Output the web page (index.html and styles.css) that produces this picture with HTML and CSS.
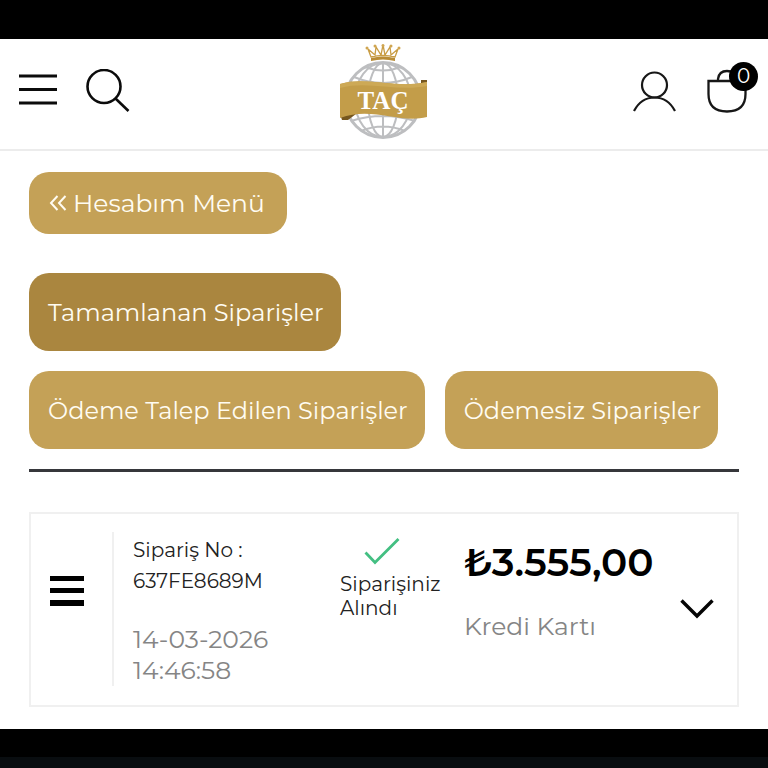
FILE: index.html
```html
<!DOCTYPE html>
<html lang="tr">
<head>
<meta charset="utf-8">
<meta name="viewport" content="width=device-width, initial-scale=1">
<title>Siparişler</title>
<link rel="stylesheet" href="styles.css">
</head>
<body>
<div class="status-strip"></div>
<header class="header">
  <div class="tools">
    <button class="icon-button" aria-label="Menü">
      <svg width="40" height="44" viewBox="0 0 40 44" fill="none" stroke="#0b0b0b" stroke-width="2.800"><path d="M1 7H39M1 20.500H39M1 34H39"/></svg>
    </button>
    <button class="icon-button" aria-label="Ara">
      <svg width="44" height="44" viewBox="0 0 44 44" fill="none" stroke="#0b0b0b" stroke-width="2.600"><circle cx="18" cy="17.500" r="16.500"/><path d="M29.500 29.500L42.500 42"/></svg>
    </button>
  </div>
  <a class="logo" href="#" aria-label="TAÇ">
    <svg width="92" height="98" viewBox="0 0 92 98">
      <g fill="none" stroke="#bdbec0" stroke-width="2">
        <circle cx="46" cy="58" r="37.500" stroke-width="3"/>
        <ellipse cx="46" cy="58" rx="15" ry="37"/>
        <ellipse cx="46" cy="58" rx="28" ry="37"/>
        <path d="M46 21V95M17 35Q46 47 75 35M28 25Q46 32 64 25M14 79Q46 69 78 79M24 89Q46 80 68 89"/>
      </g>
      <path d="M84 38H90V45H84ZM3 72H19L11 78H5Z" fill="#76571f"/>
      <path d="M3 42C30 34 58 47 90 40V75C62 82 35 64 3 76Z" fill="#c39d49"/>
      <path d="M3 42C30 34 58 47 90 40V44C60 50 30 38 3 46Z" fill="#cda956"/>
      <path d="M34 15L31 7L38 13L39 5L44 13L46 3L48 13L53 5L54 13L61 7L58 15Q46 12 34 15Z" fill="none" stroke="#c99d45" stroke-width="1.300"/>
      <path d="M34 16Q46 13 58 16V19Q46 16 34 19Z" fill="#b98c36"/>
      <g fill="#d0a652"><circle cx="30" cy="6" r="1.500"/><circle cx="38" cy="4" r="1.500"/><circle cx="46" cy="3.500" r="1.500"/><circle cx="54" cy="4" r="1.500"/><circle cx="62" cy="6" r="1.500"/></g>
      <text class="logo-text" x="46" y="67" text-anchor="middle">TAÇ</text>
    </svg>
  </a>
  <div class="tools tools-end">
    <button class="icon-button" aria-label="Hesabım">
      <svg width="44" height="44" viewBox="0 0 44 44" fill="none" stroke="#171717" stroke-width="2.200"><circle cx="21.500" cy="16" r="12.500"/><path d="M1 42C10.500 24 32.500 24 42 42"/></svg>
    </button>
    <button class="icon-button cart" aria-label="Sepet">
      <svg width="40" height="44" viewBox="0 0 40 44" fill="none" stroke="#171717" stroke-width="2.300"><path d="M1.500 12H38.500V25Q38.500 42.500 20 42.500Q1.500 42.500 1.500 25ZM11 12V10Q12 2 20 2Q28 2 29 10V12"/></svg>
      <span class="badge">0</span>
    </button>
  </div>
</header>
<main class="content">
  <button class="button back">
    <svg width="18" height="18" viewBox="0 0 18 18" fill="none" stroke="currentColor" stroke-width="2"><path d="M8.500 2L2 9L8.500 16M16.500 2L10 9L16.500 16"/></svg>
    Hesabım Menü
  </button>
  <nav class="filters" aria-label="Siparişler">
    <button class="button active">Tamamlanan Siparişler</button>
    <div class="filter-row">
      <button class="button">Ödeme Talep Edilen Siparişler</button>
      <button class="button">Ödemesiz Siparişler</button>
    </div>
  </nav>
  <article class="order">
    <div class="handle">
      <svg width="36" height="32" viewBox="0 0 36 32"><path d="M1 1H35V6H1ZM1 13H35V18H1ZM1 25H35V31H1Z" fill="#000"/></svg>
    </div>
    <div class="details">
      <p class="number">Sipariş No :<br>637FE8689M</p>
      <p class="muted">14-03-2026<br>14:46:58</p>
    </div>
    <div class="state">
      <svg width="36" height="28" viewBox="0 0 36 28" fill="none" stroke="#43bf82" stroke-width="2.800"><path d="M1.500 14.500L11 24.500L34.500 1"/></svg>
      <p>Siparişiniz Alındı</p>
    </div>
    <div class="payment">
      <p class="price">₺3.555,00</p>
      <p class="muted">Kredi Kartı</p>
    </div>
    <button class="icon-button expand" aria-label="Ayrıntılar">
      <svg width="34" height="20" viewBox="0 0 34 20" fill="none" stroke="#050505" stroke-width="3.400"><path d="M1.500 1.500L17 17L32.500 1.500"/></svg>
    </button>
  </article>
</main>
<footer class="navigation-strip"></footer>
</body>
</html>
```
FILE: styles.css
```css
* { box-sizing: border-box; }
body {
  display: flex;
  flex-direction: column;
  min-height: 100vh;
  margin: 0;
  background: #fff;
  color: #222;
  font-family: Montserrat, Inter, "Open Sans", sans-serif;
}
p { margin: 0; }
button { font: inherit; cursor: pointer; }
svg { display: block; }

.status-strip { height: 39px; background: #000; }
.header {
  display: grid;
  grid-template-columns: 1fr auto 1fr;
  align-items: center;
  height: 112px;
  padding: 0 21px 6px 18px;
  border-bottom: 2px solid #ececec;
}
.tools { display: flex; gap: 28px; }
.tools-end { justify-content: flex-end; gap: 30px; }
.icon-button { padding: 0; border: 0; background: none; color: inherit; }
.logo-text {
  fill: #fff;
  font-family: "Liberation Serif", serif;
  font-size: 25px;
  font-weight: 700;
}
.cart { position: relative; }
.badge {
  position: absolute;
  top: -7px;
  right: -11px;
  width: 29px;
  height: 29px;
  border-radius: 50%;
  background: #000;
  color: #fff;
  font-size: 20px;
  line-height: 29px;
  text-align: center;
}

.content { flex: 1; padding: 21px 29px 22px; }
.button {
  height: 78px;
  padding: 0 17px 0 19px;
  border: 0;
  border-radius: 20px;
  background: #c4a157;
  color: #fffcf2;
  font-size: 24px;
  font-weight: 400;
  white-space: nowrap;
}
.active { background: #aa863f; }
.back {
  display: flex;
  align-items: center;
  gap: 6px;
  height: 62px;
  padding: 0 22px 0 20px;
  font-size: 25px;
}
.filters {
  display: flex;
  flex-direction: column;
  align-items: flex-start;
  gap: 20px;
  margin-top: 39px;
  padding-bottom: 20px;
  border-bottom: 3px solid #36373b;
}
.filter-row { display: flex; flex-wrap: wrap; gap: 20px; }

.order {
  display: grid;
  grid-template-columns: 83px 208px 124px 1fr auto;
  margin-top: 40px;
  padding: 18px 23px 19px 0;
  border: 2px solid #f0f0f0;
}
.handle {
  display: flex;
  align-items: center;
  padding: 0 0 36px 18px;
  border-right: 2px solid #f0f0f0;
}
.details { padding-left: 19px; }
.number { padding-top: 3px; font-size: 20px; line-height: 31px; }
.muted { color: #858585; font-size: 25px; line-height: 31px; }
.details .muted { margin-top: 27px; }
.state { padding: 6px 20px 0 18px; font-size: 20px; line-height: 24px; }
.state svg { margin: 0 0 6px 24px; }
.payment { padding-left: 18px; }
.price {
  color: #000;
  font-size: 39px;
  font-weight: 600;
  line-height: 60px;
  white-space: nowrap;
}
.payment .muted { margin-top: 19px; }
.expand { align-self: center; }
.navigation-strip {
  height: 40px;
  border-top: 28px solid #000;
  background: #090d10;
}
```
